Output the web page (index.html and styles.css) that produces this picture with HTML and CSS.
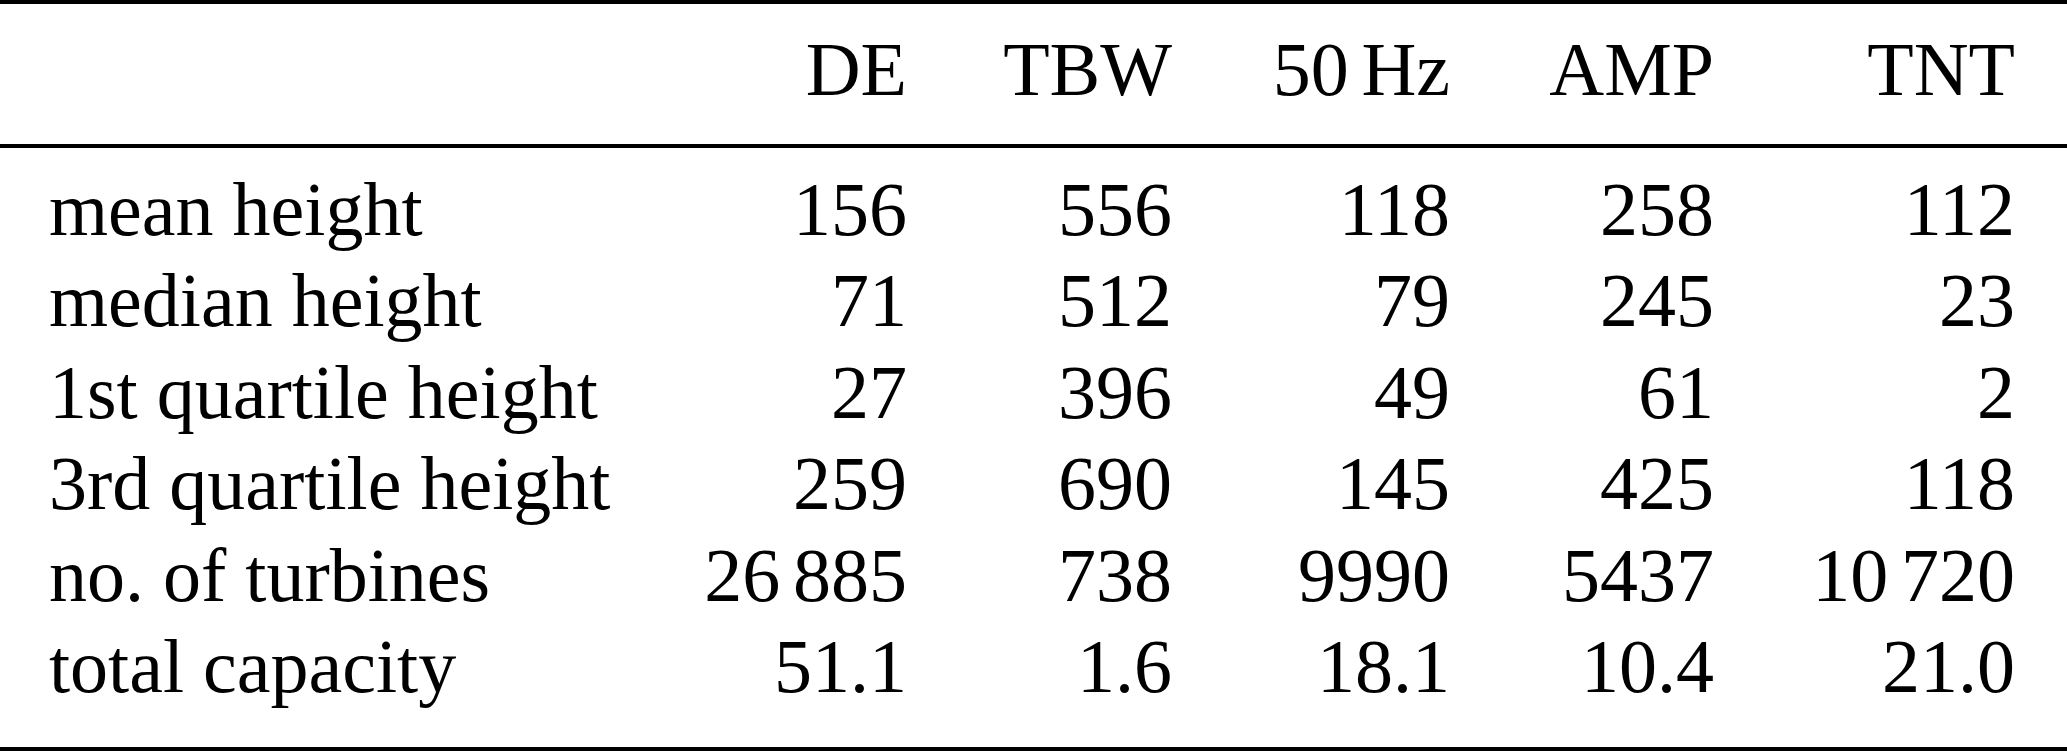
FILE: index.html
```html
<!DOCTYPE html>
<html lang="en">
<head>
<meta charset="utf-8">
<title>Turbine statistics</title>
<link rel="stylesheet" href="styles.css">
</head>
<body>
<table class="stats">
  <colgroup>
    <col class="c-label">
    <col class="c-de">
    <col class="c-tbw">
    <col class="c-hz">
    <col class="c-amp">
    <col class="c-tnt">
  </colgroup>
  <thead>
    <tr>
      <th class="label"></th>
      <th>DE</th>
      <th>TBW</th>
      <th>50<span class="thin"></span>Hz</th>
      <th>AMP</th>
      <th class="end">TNT</th>
    </tr>
  </thead>
  <tbody>
    <tr class="first">
      <td class="label">mean height</td>
      <td>156</td><td>556</td><td>118</td><td>258</td><td class="end">112</td>
    </tr>
    <tr>
      <td class="label">median height</td>
      <td>71</td><td>512</td><td>79</td><td>245</td><td class="end">23</td>
    </tr>
    <tr>
      <td class="label">1st quartile height</td>
      <td>27</td><td>396</td><td>49</td><td>61</td><td class="end">2</td>
    </tr>
    <tr>
      <td class="label">3rd quartile height</td>
      <td>259</td><td>690</td><td>145</td><td>425</td><td class="end">118</td>
    </tr>
    <tr>
      <td class="label">no. of turbines</td>
      <td>26<span class="thin"></span>885</td><td>738</td><td>9990</td><td>5437</td><td class="end">10<span class="thin"></span>720</td>
    </tr>
    <tr class="last">
      <td class="label">total capacity</td>
      <td>51.1</td><td>1.6</td><td>18.1</td><td>10.4</td><td class="end">21.0</td>
    </tr>
  </tbody>
</table>
</body>
</html>
```
FILE: styles.css
```css
html, body {
  margin: 0;
  padding: 0;
  background: #ffffff;
}

.stats {
  width: 2067px;
  table-layout: fixed;
  border-collapse: separate;
  border-spacing: 0;
  font-family: "Liberation Serif", "Times New Roman", serif;
  font-size: 76px;
  line-height: 91.5px;
  color: #000000;
}

.c-label { width: 700px; }
.c-de { width: 207px; }
.c-tbw { width: 265px; }
.c-hz { width: 278px; }
.c-amp { width: 264px; }
.c-tnt { width: 353px; }

.stats th,
.stats td {
  padding: 0;
  text-align: right;
  font-weight: normal;
  white-space: nowrap;
  vertical-align: baseline;
}

.stats .label {
  text-align: left;
  padding-left: 49px;
}

.stats .end {
  padding-right: 52px;
}

.stats thead th {
  border-top: 4px solid #000000;
  border-bottom: 4px solid #000000;
  padding-top: 20px;
  padding-bottom: 28px;
}

.stats .first td {
  padding-top: 16px;
}

.stats .last td {
  padding-bottom: 34px;
  border-bottom: 4px solid #000000;
}

.thin {
  display: inline-block;
  width: 0.1667em;
}
```
